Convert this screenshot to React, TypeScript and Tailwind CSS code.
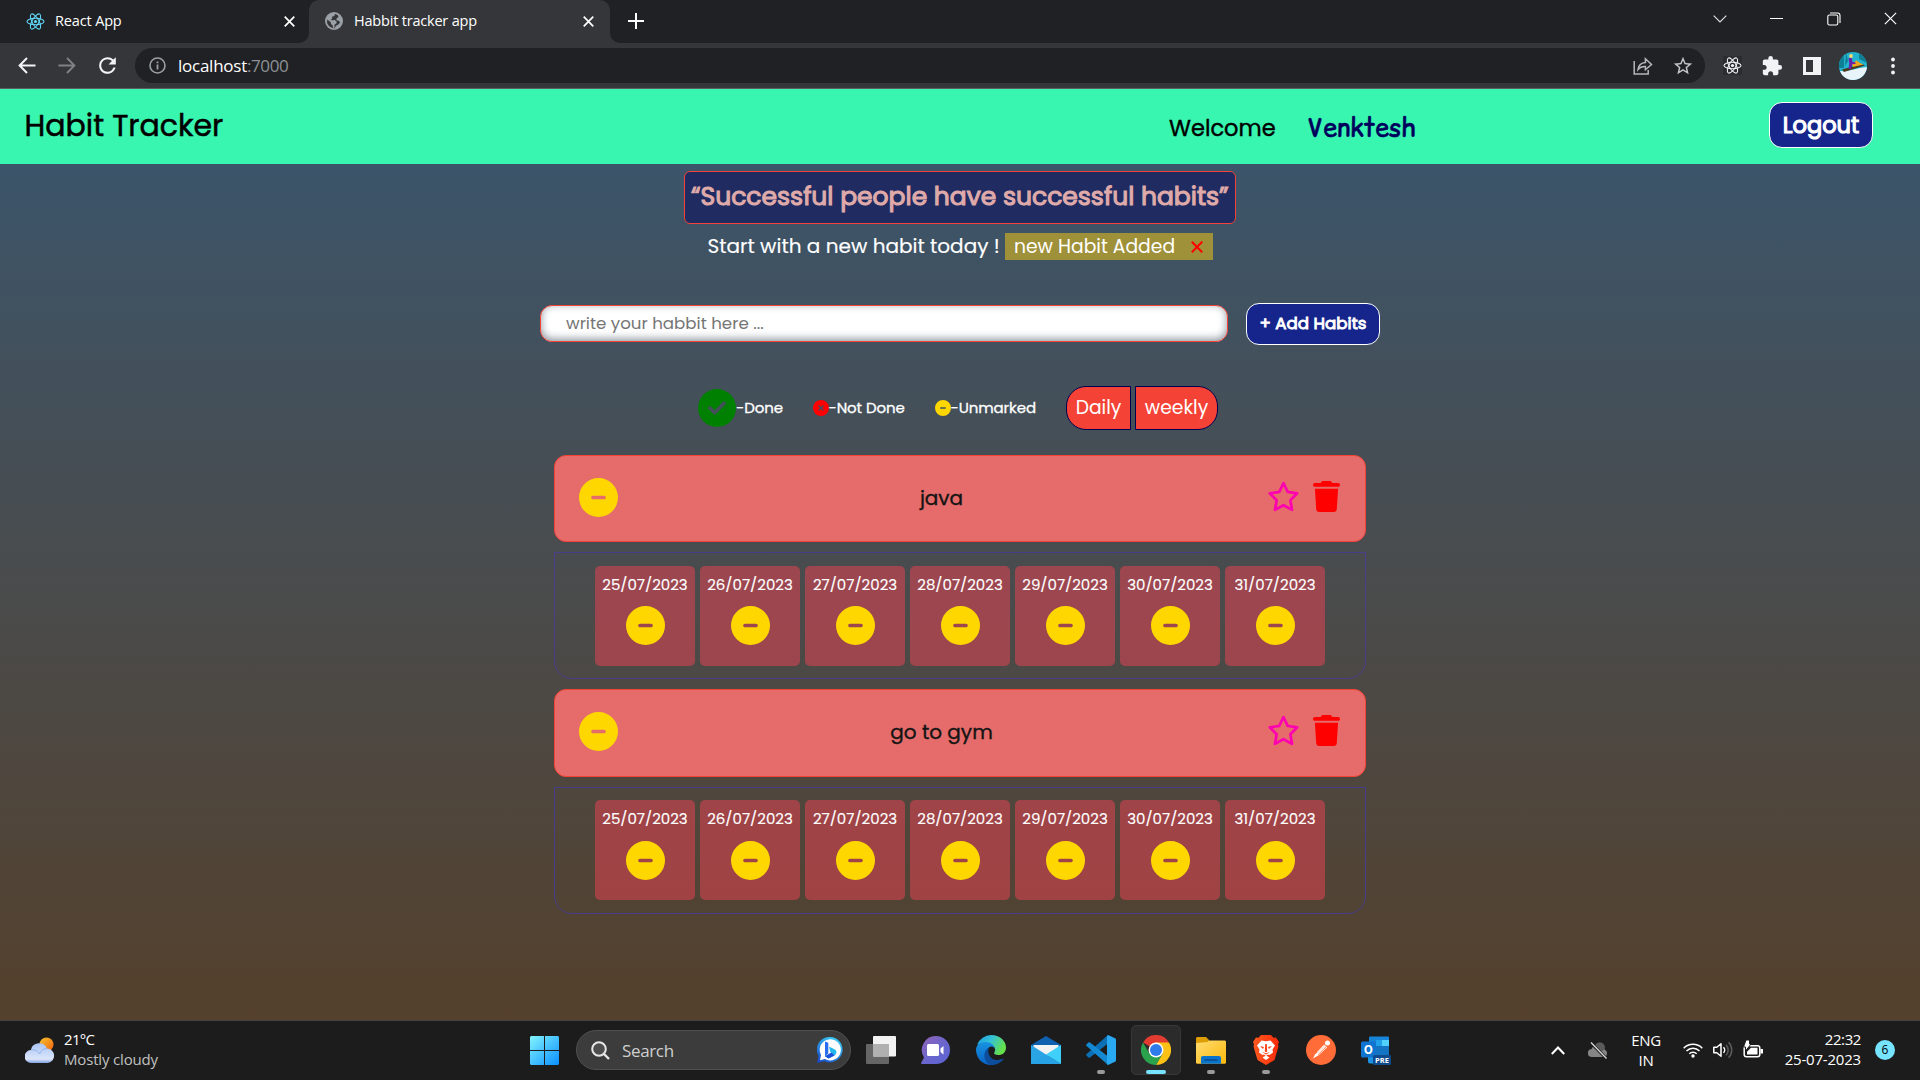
import type { ReactNode } from 'react'
import { FaCircleCheck, FaCircleMinus, FaCircleXmark, FaRegStar, FaTrash } from 'react-icons/fa6'
import { MdExtension, MdRefresh, MdStarBorder } from 'react-icons/md'

const POPPINS = "font-[Poppins,Inter,'Liberation_Sans',sans-serif] [font-feature-settings:'cv11']"
const SEGOE = "font-['Open_Sans','Noto_Sans',sans-serif]"

/* ---------- browser chrome ---------- */

function ReactLogo({ color, size }: { color: string; size: number }) {
  return (
    <svg width={size} height={size} viewBox="0 0 20 20" fill="none" stroke={color} strokeWidth="1.1">
      <ellipse cx="10" cy="10" rx="9" ry="3.5" />
      <ellipse cx="10" cy="10" rx="9" ry="3.5" transform="rotate(60 10 10)" />
      <ellipse cx="10" cy="10" rx="9" ry="3.5" transform="rotate(120 10 10)" />
      <circle cx="10" cy="10" r="1.7" fill={color} stroke="none" />
    </svg>
  )
}

function Globe() {
  return (
    <svg width="18" height="18" viewBox="0 0 18 18">
      <circle cx="9" cy="9" r="9" fill="#9aa0a6" />
      <path d="M10 2 9.200 4 7 4.800 7.200 6.800 5.400 8 7.500 8.300 9.800 8 11.600 9.600 11.400 11.600 9.600 12.600 9.400 15.800 8 16.200 7.800 13.400 6 12 5.800 10.200 2.200 7.400A7.200 7.200 0 0 0 8.500 16.300l1 .1 1.500-2.600 2.400-1.200 1.800-2.400-1.600-1.400-2.200-.6.3-2 1.800-1.200-.8-2z" fill="#35363a" />
    </svg>
  )
}

function Cross({ size = 11, width = 1.9, color = '#fff' }: { size?: number; width?: number; color?: string }) {
  return (
    <svg width={size} height={size} viewBox="0 0 12 12" stroke={color} strokeWidth={width}>
      <path d="M.8.8l10.4 10.4M11.2.8.8 11.2" />
    </svg>
  )
}

function TabStrip() {
  return (
    <div className="flex h-[43px] bg-[#202124] text-[14.5px] text-white">
      <div className="flex w-[309px] items-center pb-px pl-[26px] pr-[14px]">
        <ReactLogo color="#61dafb" size={19} />
        <span className="ml-[10px] flex-1 pb-px tracking-[-0.15px]">React App</span>
        <Cross />
      </div>
      <div className="relative flex w-[301px] items-center rounded-t-[10px] bg-[#35363a] pb-px pl-4 pr-4">
        <svg className="absolute -left-[10px] bottom-0" width="10" height="10"><path d="M10 0v10H0A10 10 0 0 0 10 0z" fill="#35363a" /></svg>
        <svg className="absolute -right-[10px] bottom-0" width="10" height="10"><path d="M0 0v10h10A10 10 0 0 1 0 0z" fill="#35363a" /></svg>
        <Globe />
        <span className="ml-[11px] flex-1 pb-px tracking-[-0.2px]">Habbit tracker app</span>
        <Cross />
      </div>
      <div className="flex w-[52px] items-center justify-center pb-px">
        <svg width="16" height="16" stroke="#fff" strokeWidth="2"><path d="M8 0v16M0 8h16" /></svg>
      </div>
      <div className="ml-auto flex h-[37px] w-[229px] items-center">
        <div className="flex w-[57px] justify-center">
          <svg width="14" height="8" fill="none" stroke="#ddd" strokeWidth="1.2"><path d="M.7.7 7 7 13.3.7" /></svg>
        </div>
        <div className="flex w-[57px] justify-center"><div className="h-px w-[13px] bg-white" /></div>
        <div className="flex w-[57px] justify-center">
          <svg width="14" height="14" fill="none" stroke="#fff" strokeWidth="1.1">
            <rect x=".8" y="3" width="10" height="10" rx="1.6" />
            <path d="M3 1h7.5A2.6 2.6 0 0 1 13 3.6V11" />
          </svg>
        </div>
        <div className="flex w-[57px] justify-center"><Cross size={13} width={1.1} /></div>
      </div>
    </div>
  )
}

function Avatar() {
  return (
    <svg width="28" height="28" viewBox="0 0 28 28">
      <clipPath id="avatar"><circle cx="14" cy="14" r="14" /></clipPath>
      <g clipPath="url(#avatar)">
        <rect width="28" height="28" fill="#22b4cf" />
        <path d="M0 4 5 0v16H0zM20 0l8 5v6l-8-4zM7 0l2 9-3 5z" fill="#0f7f96" />
        <path d="M0 19c9 1 17-3 28-4v13H0z" fill="#e9f3fa" />
        <path d="M3 17.500 23 12l3 1.500L5 20z" fill="#4a3a1f" />
        <path d="M13 12l4.500-3.500L21 11l3.500 1.500L14 15z" fill="#f2a81c" />
        <path d="M9.500 6.500l3-1 1 4.500 3 .5v1.500h-3L12 17h-2.500l.8-5z" fill="#6a1fa8" />
        <circle cx="12" cy="4" r="1.900" fill="#f4dc74" />
      </g>
    </svg>
  )
}

function Toolbar() {
  return (
    <div className="flex h-[46px] items-center border-b border-[#5d5e62] bg-[#35363a]">
      <div className="ml-[7px] flex w-10 justify-center">
        <svg width="18" height="17" viewBox="0 0 18 17" fill="none" stroke="#f1f3f4" strokeWidth="2"><path d="M17.5 8.5H2M9 1 1.6 8.5 9 16" /></svg>
      </div>
      <div className="flex w-10 justify-center">
        <svg width="18" height="17" viewBox="0 0 18 17" fill="none" stroke="#808185" strokeWidth="1.9"><path d="M.5 8.5H16M9 1l7.400 7.500L9 16" /></svg>
      </div>
      <div className="flex w-10 justify-center"><MdRefresh className="size-[25px] text-[#f1f3f4]" /></div>
      <div className="ml-[8px] flex h-[35px] w-[1570px] items-center rounded-full bg-[#202124] pl-[14px] pr-[11px]">
        <svg width="17" height="17" viewBox="0 0 17 17" fill="none" stroke="#9aa0a6" strokeWidth="1.6">
          <circle cx="8.5" cy="8.5" r="7.5" />
          <path d="M8.5 7.5v5M8.5 4.4v1.8" strokeWidth="1.8" />
        </svg>
        <span className="ml-[12px] text-[17px] tracking-[-0.25px] text-white">localhost</span>
        <span className="flex-1 text-[17px] tracking-[-0.4px] text-[#8d9195]">:7000</span>
        <svg className="mr-[19px]" width="20" height="18" viewBox="0 0 20 18" fill="none" stroke="#b4b7bb" strokeWidth="1.5">
          <path d="M1.2 4v13h14v-4" />
          <path d="M5 12.500c.6-4.500 3-6.600 7.400-6.900V1.800L18.500 7.500l-6.100 5.200V9.500C9.400 9.300 7 10 5 12.500z" />
        </svg>
        <MdStarBorder className="size-[22px] text-[#c4c7ca]" />
      </div>
      <div className="ml-[7px] flex w-10 justify-center">
        <div className="bg-[#2b2c2f]"><ReactLogo color="#f1f3f4" size={19} /></div>
      </div>
      <div className="flex w-10 justify-center"><MdExtension className="size-[22px] text-[#f1f3f4]" /></div>
      <div className="flex w-10 justify-center">
        <svg width="18" height="18"><path d="M0 0h18v18H0zM3 3v12h7V3z" fill="#f1f3f4" fillRule="evenodd" /></svg>
      </div>
      <div className="flex w-[42px] justify-center"><Avatar /></div>
      <div className="flex w-[37px] justify-center">
        <svg width="4" height="18" fill="#f1f3f4"><circle cx="2" cy="2.500" r="1.900" /><circle cx="2" cy="9" r="1.900" /><circle cx="2" cy="15.500" r="1.900" /></svg>
      </div>
    </div>
  )
}

/* ---------- habit tracker page ---------- */

function Header() {
  return (
    <header className="flex h-[75px] items-center bg-[#38f5b0] text-black">
      <h1 className="w-[1144px] pb-[2px] pl-[24.500px] text-[30px] leading-9 [-webkit-text-stroke:0.5px_black]">Habit Tracker</h1>
      <span className="w-[138px] pl-[25px] pt-[3px] text-[22.5px] leading-8 [-webkit-text-stroke:0.4px_black]">Welcome</span>
      <span className="pl-[25px] pt-[3px] font-['Comic_Relief','Comic_Neue',Lato,cursive] text-[25px] leading-8 text-[#00005c] [-webkit-text-stroke:0.6px_#00005c]">Venktesh</span>
      <button className="ml-auto mr-[47px] mb-[3px] h-[46px] w-[104px] rounded-[13px] border border-white bg-[#15258b] text-[22.5px] leading-none text-white [-webkit-text-stroke:1.1px_white]">Logout</button>
    </header>
  )
}

function AddHabit() {
  return (
    <div className="mt-[43px] flex h-[42px] w-[840px] items-center justify-between">
      <input
        className="mb-px h-[37px] w-[688px] rounded-[12px] border border-[#f44336] bg-white pb-[2px] pl-[25px] text-[16.67px] shadow-[inset_0_-2px_9px_0_rgba(60,75,90,0.6)] placeholder:text-[#757575]"
        placeholder="write your habbit here ..."
      />
      <button className="h-[42px] w-[134px] whitespace-nowrap rounded-[13px] border border-white bg-[#15258b] pb-[2px] text-[16.67px] text-white [-webkit-text-stroke:0.9px_white]">+ Add Habits</button>
    </div>
  )
}

function Legend() {
  return (
    <div className="mt-[41px] flex h-[44px] w-[524px] items-center text-[15px] text-white">
      <FaCircleCheck className="mb-px size-[38px] text-[#008000]" />
      <span className="w-[76.500px] tracking-[-0.05px] [-webkit-text-stroke:0.3px_white]">-Done</span>
      <FaCircleXmark className="size-4 text-[#ff0000]" />
      <span className="w-[106px] tracking-[-0.1px] [-webkit-text-stroke:0.3px_white]">-Not Done</span>
      <FaCircleMinus className="size-4 text-[#ffd700]" />
      <span className="w-[115.500px] tracking-[-0.1px] [-webkit-text-stroke:0.3px_white]">-Unmarked</span>
      <button className="h-[44px] w-[65px] rounded-l-[20px] border border-[#000050] bg-[#f44336] text-[18.75px] leading-none">Daily</button>
      <button className="ml-1 h-[44px] w-[83px] rounded-r-[20px] border border-[#000050] bg-[#f44336] text-[18.75px] leading-none">weekly</button>
    </div>
  )
}

const DATES = ['25/07/2023', '26/07/2023', '27/07/2023', '28/07/2023', '29/07/2023', '30/07/2023', '31/07/2023']

function Habit({ name, cardClass, panelClass, dotClass }: { name: string; cardClass: string; panelClass: string; dotClass: string }) {
  return (
    <>
      <div className={`flex w-[812px] items-center rounded-[12px] border border-[#f44336] bg-[#e66c6b] pl-[24px] ${cardClass}`}>
        <FaCircleMinus className="mb-[2px] size-[39px] text-[#ffd700]" />
        <span className="ml-[12px] w-[623px] pb-px text-center text-xl leading-none text-[#141414] [-webkit-text-stroke:0.35px_#141414]">{name}</span>
        <FaRegStar className="ml-[14px] mb-[4px] h-[31px] w-[33px] text-[#ff00b0]" />
        <FaTrash className="ml-[13px] mb-[4px] h-[31px] w-[27px] text-[#ff0000]" />
      </div>
      <div className={`mt-[10px] flex h-[127px] w-[812px] justify-center gap-[5px] rounded-b-[18px] border border-[#483d8b] ${panelClass}`}>
        {DATES.map((date) => (
          <div key={date} className="flex size-[100px] flex-col items-center rounded-[5px] bg-[#ef4154]/50 pt-[8px]">
            <span className="text-[15px] leading-[22px] text-white [-webkit-text-stroke:0.15px_white]">{date}</span>
            <FaCircleMinus className={`ml-px size-[39px] text-[#ffd700] ${dotClass}`} />
          </div>
        ))}
      </div>
    </>
  )
}

function Page() {
  return (
    <div className={`flex h-[931px] flex-col bg-gradient-to-b from-[#38566f] to-[#54402b] ${POPPINS}`}>
      <Header />
      <main className="flex flex-1 flex-col items-center">
        <div className="mt-[7px] h-[53px] w-[552px] whitespace-nowrap rounded-[6px] border border-[#f44336] bg-[#202b61] pl-[6px] text-[25px] leading-[49px] text-[#dfaaa9] [-webkit-text-stroke:1.1px_#dfaaa9]">
          “Successful people have successful habits”
        </div>
        <div className="mt-[9px] flex h-[27px] w-[506px] text-xl leading-[27px] text-white">
          <span className="w-[298px] whitespace-nowrap pl-[0.5px] [-webkit-text-stroke:0.15px_white]">Start with a new habit today !</span>
          <div className="flex flex-1 items-center bg-[#9f913a] pl-[9px] pr-[10px]">
            <span className="flex-1 whitespace-nowrap text-[18.75px]">new Habit Added</span>
            <Cross size={12} width={2} color="#ff0000" />
          </div>
        </div>
        <AddHabit />
        <Legend />
        <Habit name="java" cardClass="mt-[25px] h-[87px]" panelClass="pt-[13px]" dotClass="mt-[10px]" />
        <Habit name="go to gym" cardClass="mt-[10px] h-[88px] pb-px" panelClass="pt-[12px]" dotClass="mt-[11px]" />
      </main>
    </div>
  )
}

/* ---------- Windows taskbar ---------- */

function Weather() {
  return (
    <svg width="30" height="26" viewBox="0 0 30 26">
      <defs>
        <linearGradient id="sun" x1="0" y1="0" x2="1" y2="1"><stop stopColor="#f9c22e" /><stop offset="1" stopColor="#f0620f" /></linearGradient>
        <linearGradient id="cloud" x1="0" y1="0" x2="0" y2="1"><stop stopColor="#a9c4f5" /><stop offset=".8" stopColor="#dbe6fa" /><stop offset="1" stopColor="#7f9fe0" /></linearGradient>
      </defs>
      <circle cx="21.500" cy="7.500" r="7" fill="url(#sun)" />
      <path d="M6.500 26a6.500 6.500 0 0 1-.7-13A8.500 8.500 0 0 1 22 11.500 7.300 7.300 0 0 1 23 26z" fill="url(#cloud)" />
      <path d="M6 13c4-.8 7 .8 8.500 4 1.500-3.500 4-5.600 7.500-5.500" fill="none" stroke="#8eaeea" strokeWidth=".9" />
    </svg>
  )
}

function WindowsLogo() {
  return (
    <svg width="29" height="29" viewBox="0 0 29 29">
      <linearGradient id="win" gradientUnits="userSpaceOnUse" x1="0" y1="0" x2="29" y2="29"><stop stopColor="#82f4ff" /><stop offset="1" stopColor="#0a8fff" /></linearGradient>
      <path d="M1 0h13v14H0V1zM15 0h13l1 1v13H15zM0 15h14v14H1l-1-1zM15 15h14v13l-1 1H15z" fill="url(#win)" />
    </svg>
  )
}

function Bing() {
  return (
    <svg width="26" height="26" viewBox="0 0 26 26">
      <linearGradient id="bing" x1="0" y1="1" x2=".6" y2="0"><stop stopColor="#1740c4" /><stop offset="1" stopColor="#36c5f4" /></linearGradient>
      <path d="M13 0a12.700 12.700 0 1 1-5.500 24.200L0 26l1.500-7A12.700 12.700 0 0 1 13 0z" fill="url(#bing)" />
      <path d="M13 2.200A10.600 10.600 0 1 1 8 22l-5 1.300L4 18A10.600 10.600 0 0 1 13 2.200z" fill="#fff" />
      <path d="M8 4.500l3.300 1.200v10.800L8 19.300z" fill="#2a6cf0" />
      <path d="M12 9.500l6.300 3.300c2 1.600 1.200 4.400-.8 5.600l-6 3L8 19.300l6.500-3.500-1.300-1z" fill="#22b8ee" />
      <path d="M8 19.300l6.500-3.700 3 2.800-6 3z" fill="#1d4fd8" />
    </svg>
  )
}

function TaskView() {
  return (
    <svg width="30" height="28" viewBox="0 0 30 28">
      <rect y="8" width="23" height="20" rx="1" fill="#656565" />
      <rect x="7" width="23" height="20.500" rx="1" fill="#f2f2f2" />
      <path d="M7 8h16v12.500H7z" fill="#b0b0b0" />
    </svg>
  )
}

function Chat() {
  return (
    <svg width="29" height="28" viewBox="0 0 29 28">
      <linearGradient id="chat" x1="0" y1="0" x2="1" y2="1"><stop stopColor="#9564b4" /><stop offset=".5" stopColor="#6b66cc" /><stop offset="1" stopColor="#5a63d6" /></linearGradient>
      <path d="M15 0a14 14 0 1 1 0 28H1c-1 0-1.200-.8-.7-1.500L3 21.500A14 14 0 0 1 15 0z" fill="url(#chat)" />
      <rect x="6" y="8" width="12" height="12" rx="1.500" fill="#fff" />
      <path d="M19.500 12.500 22.500 10v8.500l-3-2.500z" fill="#fff" />
    </svg>
  )
}

function Edge() {
  return (
    <svg width="30" height="30" viewBox="0 0 30 30">
      <defs>
        <linearGradient id="edgeA" x1="0" y1="0" x2="1" y2=".4"><stop offset=".1" stopColor="#1fa4e0" /><stop offset=".5" stopColor="#35c1d6" /><stop offset="1" stopColor="#64e04a" /></linearGradient>
        <linearGradient id="edgeB" x1="0" y1="0" x2="0" y2="1"><stop stopColor="#1793e0" /><stop offset="1" stopColor="#0a62c4" /></linearGradient>
      </defs>
      <path d="M15 0c9 0 15 6 15 12.500 0 5-3.500 7.500-7.500 7.500-3.500 0-4.800-1.200-4.300-2.200 2.500-3.800 0-8.300-5.200-8.300H1.200A15 15 0 0 1 15 0z" fill="url(#edgeA)" />
      <path d="M0 15C0 10 4 7 9 7c6 0 10 3.500 10.300 8-.5-3-4-4.500-6.300-2.500-5 4-1 15.500 6 16.900A15 15 0 0 1 0 15z" fill="url(#edgeB)" />
      <path d="M13 12.500c-2.500 6 2 13.500 9 12.500 3-.5 5-1.500 6-1.500C25 28 20 30 15 30c-7-2-9.500-13.500-2-17.500z" fill="#0c4d9c" />
    </svg>
  )
}

function Mail() {
  return (
    <svg width="30" height="28" viewBox="0 0 30 28">
      <path d="M0 9 15 0l15 9v10H0z" fill="#1060b0" />
      <path d="M2.500 9h25v8L15 21 2.500 17z" fill="#f2f2f2" />
      <path d="M0 9l30 19H0z" fill="#2ba4e6" />
      <path d="M30 9 15 18.500 30 28z" fill="#3fd0fa" />
      <path d="M0 28h30L15 18.500z" fill="#27a2e4" />
    </svg>
  )
}

function VsCode() {
  return (
    <svg width="30" height="30" viewBox="0 0 30 30">
      <path d="M22 0v8.500L4 22.500c-.5.400-1 .4-1.500 0L.6 20.800c-.6-.6-.6-1.300 0-1.800z" fill="#0a6fb5" />
      <path d="M22 30v-8.500L4 7.500c-.5-.4-1-.4-1.500 0L.6 9.200c-.6.6-.6 1.300 0 1.800z" fill="#1489d2" />
      <path d="M22 0l7 3.200c.7.300 1 .8 1 1.500v20.600c0 .7-.3 1.200-1 1.500L22 30c-.7-.4-1-1-1-1.800V1.800C21 1 21.300.4 22 0z" fill="#29a9f2" />
    </svg>
  )
}

function Chrome() {
  return (
    <svg width="30" height="30" viewBox="0 0 30 30">
      <path d="M15 15 2 7.500a15 15 0 0 1 26 0z" fill="#e23c30" />
      <path d="M15 7.500h13A15 15 0 0 1 15 30l6.500-11.500z" fill="#fbc116" />
      <path d="M2 7.500l6.500 11.200L15 22l6.500-3.300L15 30A15 15 0 0 1 2 7.500z" fill="#2ba24c" />
      <circle cx="15" cy="15" r="7.500" fill="#fff" />
      <circle cx="15" cy="15" r="6" fill="#2f7bea" />
    </svg>
  )
}

function Explorer() {
  return (
    <svg width="30" height="27" viewBox="0 0 30 27">
      <linearGradient id="folder" x1="0" y1="0" x2="1" y2="1"><stop stopColor="#ffdc70" /><stop offset="1" stopColor="#fbb90c" /></linearGradient>
      <path d="M1 0h9l3 3v5H0V1z" fill="#dd9d05" />
      <path d="M11.500 5 13 3.500h16l1 1V26l-1 .7H1L0 26V6z" fill="url(#folder)" />
      <path d="M5 26.700V21c0-1.200.8-2 2-2h16c1.200 0 2 .8 2 2v5.700z" fill="#0a74cc" />
      <path d="M8.500 23h13" stroke="#0b3f7c" strokeWidth="1.200" />
    </svg>
  )
}

function Postman() {
  return (
    <svg width="30" height="30" viewBox="0 0 30 30">
      <circle cx="15" cy="15" r="15" fill="#ff6c37" />
      <circle cx="21.500" cy="8" r="2.500" fill="#fff" />
      <path d="M19 10.500l2 1.800L13 20l-6 3.500 2-4z" fill="#fff" />
      <path d="M18 9.500 11 17l2 2 8-6.500z" fill="#ffe7dc" />
      <path d="M20 12l-8 8" stroke="#ff6c37" strokeWidth=".6" />
    </svg>
  )
}

function Outlook() {
  return (
    <svg width="30" height="30" viewBox="0 0 30 30">
      <rect x="8" y="1.500" width="20" height="22" rx="1" fill="#1784d8" />
      <path d="M15 5h6v6h-6z" fill="#1fa0e8" />
      <path d="M21 5h7v6h-7z" fill="#50d0fa" />
      <path d="M15 11h13v9H15z" fill="#1474c4" />
      <path d="M7 20h22v6c0 1.500-1 2.500-2.500 2.500H9c-1.200 0-2-.8-2-2z" fill="#1b93e2" />
      <rect y="6.500" width="15" height="16" rx="1.500" fill="#0f74cf" />
      <text x="7.400" y="18.600" textAnchor="middle" fontFamily="Open Sans, sans-serif" fontWeight="700" fontSize="11.500" fill="#fff">O</text>
      <rect x="12" y="20" width="18" height="10" rx="1.500" fill="#0f4a8c" />
      <text x="21" y="27.800" textAnchor="middle" fontFamily="Open Sans, sans-serif" fontWeight="700" fontSize="7.500" fill="#fff">PRE</text>
    </svg>
  )
}

function Brave() {
  return (
    <svg width="26" height="30" viewBox="0 0 26 30">
      <linearGradient id="brave" x1="0" y1="0" x2="1" y2="0"><stop stopColor="#ff5a1f" /><stop offset="1" stopColor="#f52a0a" /></linearGradient>
      <path d="M8 0h10l2.500 2.800L23 2.500l3 4.500-1 2.500.5 2L21.500 25 13 30 4.500 25 .5 11.500l.5-2L0 7l3-4.500 2.500.3z" fill="url(#brave)" />
      <path d="M8.500 5.500l4.500.8 4.500-.8 4.500 5-2.500 4 .5 3-3.500 2.500-1.500-.5-2 1.500-2-1.500-1.500.5L6 17.500l.5-3-2.500-4z" fill="#fff" />
      <path d="M13 20.500l3.500 2L13 25l-3.500-2.500z" fill="#fff" />
      <path d="M7 11l4 1-1 2zM19 11l-4 1 1 2zM12.200 9h1.600l.4 7.500-1.200.8-1.200-.8zM9 17l4 2.500 4-2.500-1 .2-3 1-3-1z" fill="#fb4216" />
    </svg>
  )
}

function TaskItem({ children, active, running }: { children: ReactNode; active?: boolean; running?: boolean }) {
  return (
    <div className="flex w-[55px] justify-center">
      <div className={`relative flex h-[50px] w-[50px] items-center justify-center ${active ? 'rounded-[5px] border border-[#383838] bg-[#2b2b2b]' : ''}`}>
        {children}
        {active && <span className="absolute bottom-0 h-[4px] w-5 rounded-full bg-[#76e3ff]" />}
        {running && <span className="absolute bottom-px h-[4px] w-2 rounded-full bg-[#9a9a9a]" />}
      </div>
    </div>
  )
}

function Tray() {
  return (
    <div className="flex w-[369px] items-center text-[15px] leading-5 text-white">
      <svg width="14" height="9" fill="none" stroke="#fff" strokeWidth="2"><path d="M.8 8 7 1.500 13.200 8" /></svg>
      <svg className="ml-[23px]" width="20" height="17" viewBox="0 0 20 17">
        <path d="M4 15a4 4 0 0 1-.3-8 5 5 0 0 1 6-3.500 5 5 0 0 1 6.800 4A4 4 0 0 1 16.500 15z" fill="#858585" />
        <path d="M7 3.500a5 5 0 0 1 9.500 4L12 10z" fill="#5a5a5a" />
        <path d="M3 1l15.500 15.500" stroke="#1c1c1c" strokeWidth="3" />
        <path d="M3 .500l15.500 16" stroke="#ddd" strokeWidth="1.300" />
      </svg>
      <div className="ml-[22px] flex w-[32px] flex-col items-center pb-px tracking-[-0.3px]">
        <span>ENG</span>
        <span>IN</span>
      </div>
      <svg className="ml-[21px]" width="20" height="16" viewBox="0 0 20 16" fill="none" stroke="#fff" strokeWidth="1.500">
        <path d="M.7 6.200a13 13 0 0 1 18.600 0M3.500 9a9 9 0 0 1 13 0M6.300 11.800a5.200 5.200 0 0 1 7.400 0" />
        <circle cx="10" cy="14" r="1.700" fill="#fff" stroke="none" />
      </svg>
      <svg className="ml-[10px]" width="20" height="18" viewBox="0 0 20 18" fill="none" strokeWidth="1.500">
        <path d="M.8 6.300v5.400h3L8 15.300V2.700L3.800 6.300z" stroke="#fff" strokeLinejoin="round" />
        <path d="M10.500 6.200a4 4 0 0 1 0 5.600" stroke="#fff" />
        <path d="M13 3.700a7.500 7.500 0 0 1 0 10.600M15.500 1.200a11 11 0 0 1 0 15.600" stroke="#5c5c5c" />
      </svg>
      <svg className="mb-[2px] ml-[10px]" width="20" height="18" viewBox="0 0 20 18">
        <rect x="1.200" y="5.700" width="15.600" height="11" rx="2.200" fill="none" stroke="#fff" strokeWidth="1.500" />
        <path d="M4 14.500v-2.700L8 7.800h6.500v6.700zM17.500 9h2.500v4.500h-2.500z" fill="#fff" />
        <path d="M3 0h3.500v4H8L2.500 11V7H.5z" fill="#fff" stroke="#1c1c1c" strokeWidth="1" />
      </svg>
      <div className="ml-[18px] flex w-[80px] flex-col items-end whitespace-nowrap pb-[2px] tracking-[-0.2px]">
        <span className="tracking-[-0.4px]">22:32</span>
        <span>25-07-2023</span>
      </div>
      <span className="ml-[14px] flex size-5 items-center justify-center rounded-full bg-[#76e3ff] text-[12px] leading-none text-black">6</span>
    </div>
  )
}

function Taskbar() {
  return (
    <div className="flex h-[60px] items-center border-t border-[#424242] bg-[#1c1c1c] pb-px">
      <div className="flex w-[530px] items-center pl-[25px]">
        <Weather />
        <div className="ml-[9px] pb-[3px] text-[15px] leading-5">
          <div className="tracking-[-0.7px] text-white">21°C</div>
          <div className="tracking-[-0.17px] text-[#c0c0c0]">Mostly cloudy</div>
        </div>
      </div>
      <WindowsLogo />
      <div className="ml-[17px] flex h-10 w-[275px] items-center rounded-full border border-[#505050] bg-[#3c3c3c] pl-[14px] pr-[7px]">
        <svg width="19" height="19" viewBox="0 0 19 19" fill="none" stroke="#e8e8e8" strokeWidth="2">
          <circle cx="8" cy="8" r="6.800" fill="#4e4e4e" />
          <path d="M13 13l5 5" strokeWidth="2.400" />
        </svg>
        <span className="ml-[12px] flex-1 pt-px text-[17px] tracking-[-0.35px] text-[#cfcfcf]">Search</span>
        <Bing />
      </div>
      <div className="ml-[2px] flex flex-1">
        <TaskItem><TaskView /></TaskItem>
        <TaskItem><Chat /></TaskItem>
        <TaskItem><Edge /></TaskItem>
        <TaskItem><Mail /></TaskItem>
        <TaskItem running><VsCode /></TaskItem>
        <TaskItem active><Chrome /></TaskItem>
        <TaskItem running><Explorer /></TaskItem>
        <TaskItem running><Brave /></TaskItem>
        <TaskItem><Postman /></TaskItem>
        <TaskItem><Outlook /></TaskItem>
      </div>
      <Tray />
    </div>
  )
}

export default function App() {
  return (
    <div className={`flex h-[1080px] w-[1920px] flex-col overflow-hidden ${SEGOE}`}>
      <TabStrip />
      <Toolbar />
      <Page />
      <Taskbar />
    </div>
  )
}
